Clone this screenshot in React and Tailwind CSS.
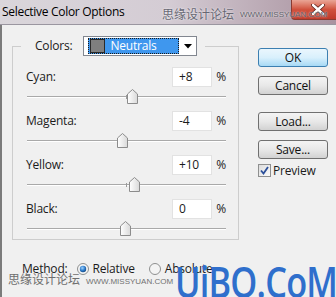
import { useState } from "react";

const rows = [
  { name: "Cyan:", value: "+8", thumb: "left-[101px]" },
  { name: "Magenta:", value: "-4", thumb: "left-[91px]" },
  { name: "Yellow:", value: "+10", thumb: "left-[103px]" },
  { name: "Black:", value: "0", thumb: "left-[94px]" },
];

function Thumb({ pos }) {
  return (
    <svg className={`absolute top-[2px] ${pos}`} width="11" height="15" viewBox="0 0 11 15">
      <defs>
        <linearGradient id="thumbFill" x1="0" y1="0" x2="1" y2="0">
          <stop offset="0" stopColor="#ffffff" />
          <stop offset="1" stopColor="#d9d9d9" />
        </linearGradient>
      </defs>
      <path d="M0.5 5 L5.5 0.5 L10.5 5 V14.5 H0.5 Z" fill="url(#thumbFill)" stroke="#8c8c8c" />
    </svg>
  );
}

function Slider({ pos }) {
  return (
    <div className="relative h-[16px]">
      <div className="absolute left-[1px] right-0 top-[9px] h-[2px] border-t border-b border-t-[#a9a9a9] border-b-white" />
      <div className="absolute left-[100px] top-[8px] w-px h-[4px] bg-[#9a9a9a]" />
      <Thumb pos={pos} />
    </div>
  );
}

function Button({ label, primary }) {
  return (
    <button
      className={
        primary
          ? "w-[70px] h-[19px] rounded-[3px] border border-[#3c7fb1] bg-gradient-to-b from-[#eaf6fd] via-[#d9f0fc] to-[#a7d9f5] text-[12px] leading-none text-[#111]"
          : "w-[70px] h-[19px] rounded-[3px] border border-[#707070] bg-gradient-to-b from-[#f4f4f4] via-[#e8e8e8] to-[#d2d2d2] text-[12px] leading-none text-[#111]"
      }
    >
      {label}
    </button>
  );
}

function Radio({ checked }) {
  return (
    <svg width="12" height="12" viewBox="0 0 12 12">
      <defs>
        <radialGradient id="dot" cx="0.4" cy="0.35" r="0.7">
          <stop offset="0" stopColor="#9fd3ff" />
          <stop offset="0.6" stopColor="#2a78c8" />
          <stop offset="1" stopColor="#14437a" />
        </radialGradient>
      </defs>
      <circle cx="6" cy="6" r="5.5" fill="#f4f4f4" stroke="#8e8f8f" />
      {checked && <circle cx="6" cy="6" r="3.2" fill="url(#dot)" />}
    </svg>
  );
}

export default function App() {
  const [preview] = useState(true);

  return (
    <div className="relative w-[336px] h-[297px] overflow-hidden bg-[#f0f0f0] font-['Open_Sans','Liberation_Sans',sans-serif] text-[12px] tracking-[-0.2px] text-[#1b1b1b]">
      {/* title bar */}
      <div className="relative flex h-[25px] bg-gradient-to-r from-[#dad6db] via-[#d4ccd4] to-[#a9929f] border-b border-[#9a96a0]">
        <div className="pl-[2px] pt-[3px] text-[12px] tracking-[-0.3px] text-black">Selective Color Options</div>
        <div className="ml-auto w-[45px] h-[20px] rounded-bl-[4px] border-l border-b border-[#8a3b31] bg-gradient-to-b from-[#e9a596] via-[#d0513d] to-[#c0392a] flex items-center justify-center pl-[8px]">
          <svg width="14" height="11" viewBox="0 0 14 11">
            <path d="M2 1 L12 10 M12 1 L2 10" stroke="#5a1f18" strokeWidth="4" strokeLinecap="round" />
            <path d="M2 1 L12 10 M12 1 L2 10" stroke="#ffffff" strokeWidth="2.4" strokeLinecap="round" />
          </svg>
        </div>
        <div className="absolute left-[162px] top-[8px] text-[12px] leading-[12px] tracking-normal text-[#676773] font-['Noto_Sans_CJK_SC',sans-serif] [text-shadow:0_0_2px_#fff]">思缘设计论坛</div>
        <div className="absolute left-[240px] top-[11px] text-[8px] leading-[8px] tracking-normal text-[#5e5e68] font-['Liberation_Sans',sans-serif] [text-shadow:0_0_2px_#fff]">WWW.MISSYUAN.COM</div>
      </div>

      {/* body */}
      <div className="flex h-[272px] border-l-2 border-[#7b7b7b]">
        <div className="w-[238px] pl-[10px] pt-[11px]">
          <fieldset className="w-[227px] border border-[#cdcdcd] pb-[4px]">
            <legend className="ml-[8px] pl-[14px] pr-[8px]">
              <div className="flex items-center h-[20px]">
                <span>Colors:</span>
                <div className="ml-[11px] w-[114px] h-[20px] border border-[#828790] bg-white flex items-center pl-[4px] pr-[2px]">
                  <div className="flex items-center h-[16px] w-[91px] bg-[#3f97ee] border border-dotted border-[#1a1a1a]">
                    <div className="ml-[1px] w-[15px] h-[14px] bg-[#7f7f7f] border border-[#2a2a2a]" />
                    <span className="ml-[5px] text-white">Neutrals</span>
                  </div>
                  <svg className="ml-auto mr-[2px]" width="8" height="5" viewBox="0 0 8 5">
                    <path d="M0 0 H8 L4 4.5 Z" fill="#000" />
                  </svg>
                </div>
              </div>
            </legend>
            <div className="pl-[13px] pr-[12px] pt-[11px] flex flex-col gap-[8px]">
              {rows.map((r) => (
                <div key={r.name}>
                  <div className="flex items-center h-[20px]">
                    <span>{r.name}</span>
                    <div className="ml-auto w-[40px] h-[20px] bg-white border border-[#e2e2e2] pl-[6px] flex items-center">{r.value}</div>
                    <span className="ml-[4px] w-[10px] text-right">%</span>
                  </div>
                  <Slider pos={r.thumb} />
                </div>
              ))}
            </div>
          </fieldset>

          <div className="flex items-center h-[16px] mt-[21px] pl-[10px]">
            <span>Method:</span>
            <span className="ml-[10px] flex items-center"><Radio checked /></span>
            <span className="ml-[3px]">Relative</span>
            <span className="ml-[14px] flex items-center"><Radio /></span>
            <span className="ml-[4px]">Absolute</span>
          </div>
        </div>

        <div className="pl-[18px] pt-[23px] flex flex-col">
          <Button label="OK" primary />
          <div className="mt-[9px]"><Button label="Cancel" /></div>
          <div className="mt-[17px]"><Button label="Load..." /></div>
          <div className="mt-[9px]"><Button label="Save..." /></div>
          <div className="mt-[5px] flex items-center h-[13px]">
            <div className="w-[13px] h-[13px] border border-[#8e8f8f] bg-gradient-to-br from-[#dcdcdc] to-[#fbfbfb] flex items-center justify-center">
              {preview && (
                <svg width="9" height="9" viewBox="0 0 9 9">
                  <path d="M1 4.5 L3.5 7.5 L8 1" fill="none" stroke="#2b4f9a" strokeWidth="1.8" />
                </svg>
              )}
            </div>
            <span className="ml-[2px]">Preview</span>
          </div>
        </div>
      </div>

      {/* watermarks */}
      <div className="absolute left-[8px] top-[273px] text-[12px] leading-[12px] tracking-normal text-[#6e6e6e] font-['Noto_Sans_CJK_SC',sans-serif]">思缘设计论坛</div>
      <div className="absolute left-[86px] top-[278px] text-[8px] leading-[8px] tracking-normal text-[#707070] font-['Liberation_Sans',sans-serif]">WWW.MISSYUAN.COM</div>
      <div className="absolute left-[175px] top-[259px] text-[44px] leading-[44px] tracking-[-1px] scale-x-[0.78] origin-left font-semibold text-[#2f6fcc] font-['Open_Sans',sans-serif]">UiBQ.CoM</div>
    </div>
  );
}
